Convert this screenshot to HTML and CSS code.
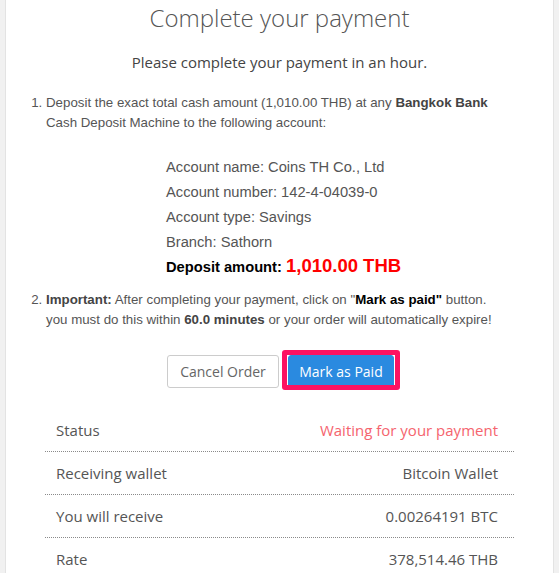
FILE: index.html
```html
<!DOCTYPE html>
<html lang="en">
<head>
<meta charset="utf-8">
<title>Complete your payment</title>
<link rel="stylesheet" href="styles.css">
</head>
<body>
<div class="card">
  <h1 class="title">Complete your payment</h1>
  <p class="subtitle">Please complete your payment in an hour.</p>
  <ol class="steps">
    <li class="step">
      Deposit the exact total cash amount (1,010.00 THB) at any <b>Bangkok Bank</b> Cash Deposit Machine to the following account:
      <div class="account">
        <div>Account name: Coins TH Co., Ltd</div>
        <div>Account number: 142-4-04039-0</div>
        <div>Account type: Savings</div>
        <div>Branch: Sathorn</div>
        <div class="deposit"><b>Deposit amount:</b> <span class="amount">1,010.00 THB</span></div>
      </div>
    </li>
    <li class="step step-two">
      <b>Important:</b> After completing your payment, click on "<b class="strong">Mark as paid"</b> button. you must do this within <b>60.0 minutes</b> or your order will automatically expire!
    </li>
  </ol>
  <div class="actions">
    <button class="btn btn-cancel">Cancel Order</button>
    <span class="highlight-wrap">
      <button class="btn btn-primary">Mark as Paid</button>
      <span class="highlight"></span>
    </span>
  </div>
  <div class="details">
    <div class="row"><span class="label">Status</span><span class="value waiting">Waiting for your payment</span></div>
    <div class="row"><span class="label">Receiving wallet</span><span class="value">Bitcoin Wallet</span></div>
    <div class="row"><span class="label">You will receive</span><span class="value">0.00264191 BTC</span></div>
    <div class="row"><span class="label">Rate</span><span class="value">378,514.46 THB</span></div>
  </div>
</div>
</body>
</html>
```

FILE: styles.css
```css
html, body {
  margin: 0;
  padding: 0;
}
body {
  background: #f1f1f1;
  height: 573px;
  overflow: hidden;
}
.card {
  margin-left: 5px;
  width: 547px;
  min-height: 573px;
  background: #ffffff;
  border-left: 1px solid #e3e3e3;
  border-right: 1px solid #e3e3e3;
}
.title {
  margin: 0;
  padding-top: 2px;
  font-family: "Open Sans", sans-serif;
  font-weight: 300;
  font-size: 24px;
  line-height: 31px;
  color: #555555;
  text-align: center;
}
.subtitle {
  margin: 19px 0 0;
  font-family: "Open Sans", sans-serif;
  font-size: 15px;
  line-height: 20px;
  color: #444444;
  text-align: center;
}
.steps {
  margin: 21px 53px 0 0;
  padding-left: 40px;
  font-family: "Liberation Sans", Arial, sans-serif;
  font-size: 13.3px;
  line-height: 20px;
  color: #555555;
}
.steps b {
  color: #444444;
}
.steps b.strong {
  color: #000000;
}
.account {
  margin: 22px 0 0 120px;
  font-size: 14.7px;
  line-height: 25px;
  color: #555555;
}
.account .deposit b {
  color: #000000;
}
.amount {
  color: #ff0000;
  font-weight: bold;
  font-size: 18.5px;
  line-height: 1;
}
.step-two {
  margin-top: 10px;
}
.actions {
  margin-top: 25px;
  padding-left: 2px;
  display: flex;
  justify-content: center;
  gap: 9px;
}
.btn {
  font-family: "Open Sans", sans-serif;
  font-size: 14px;
  height: 33px;
  border-radius: 3px;
  padding: 0;
  cursor: pointer;
}
.btn-cancel {
  width: 112px;
  background: #ffffff;
  border: 1px solid #cccccc;
  color: #666666;
}
.highlight-wrap {
  position: relative;
  display: block;
}
.btn-primary {
  width: 106px;
  background: #2a8ae0;
  border: 1px solid #2a8ae0;
  color: #ffffff;
  display: block;
}
.highlight {
  position: absolute;
  left: -6px;
  right: -6px;
  top: -5px;
  bottom: -2px;
  border: 5px solid #fc1262;
  border-radius: 3px;
  pointer-events: none;
}
.details {
  margin: 21px 39px 0;
  font-family: "Open Sans", sans-serif;
  font-size: 15px;
  line-height: 20px;
  color: #555555;
}
.row {
  display: flex;
  justify-content: space-between;
  padding: 11px 16px 11px 11px;
  border-bottom: 1px dotted #8a8a8a;
}
.waiting {
  color: #f5646e;
}
```
